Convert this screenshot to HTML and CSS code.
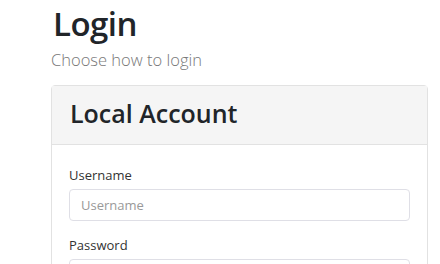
FILE: index.html
```html
<!DOCTYPE html>
<html lang="en">

<head>
    <meta charset="UTF-8">
    <meta name="viewport" content="width=device-width, initial-scale=1.0">
    <title>Login</title>
    <link rel="stylesheet" href="styles.css">
</head>

<body>
    <div class="page">
        <h1>Login</h1>
        <p class="lead">Choose how to login</p>

        <div class="panel">
            <div class="panel-heading">
                <h2>Local Account</h2>
            </div>
            <div class="panel-body">
                <div class="form-group">
                    <label for="username">Username</label>
                    <input type="text" id="username" placeholder="Username">
                </div>
                <div class="form-group">
                    <label for="password">Password</label>
                    <input type="password" id="password" placeholder="Password">
                </div>
            </div>
        </div>
    </div>
</body>

</html>
```

FILE: styles.css
```css
body {
    margin: 0;
    font-family: "Open Sans", "Noto Sans", sans-serif;
    color: #212529;
    background: #fff;
}

.page {
    padding: 0 12px 0 51px;
}

h1 {
    margin: 6px 0 0 2px;
    font-size: 33px;
    font-weight: 600;
    line-height: 1.1;
    letter-spacing: -0.5px;
}

.lead {
    margin: 7px 0 0 0;
    font-size: 16.5px;
    font-weight: 300;
    line-height: 1.3;
    color: #777;
}

.panel {
    margin-top: 14px;
    border: 1px solid #e2e2e2;
    border-radius: 4px;
}

.panel-heading {
    background: #f5f5f5;
    border-bottom: 1px solid #e2e2e2;
    height: 59px;
    display: flex;
    align-items: center;
    padding: 0 18px 4px;
    box-sizing: border-box;
}

.panel-heading h2 {
    margin: 0;
    font-size: 25px;
    font-weight: 600;
}

.panel-body {
    padding: 21px 17px 18px;
}

.form-group {
    margin-bottom: 15px;
}

label {
    display: block;
    font-size: 13px;
    color: #333;
    margin-bottom: 5px;
}

input {
    box-sizing: border-box;
    width: 100%;
    height: 32px;
    padding: 0 11px;
    border: 1px solid #dfdfe6;
    border-radius: 4px;
    font-family: inherit;
    font-size: 13px;
    color: #555;
}

input::placeholder {
    color: #999;
}
```
